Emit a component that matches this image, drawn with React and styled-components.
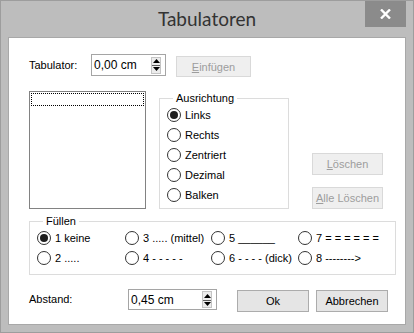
import React from 'react';
import styled, { createGlobalStyle } from 'styled-components';

const GlobalStyle = createGlobalStyle`
    html, body {
        margin: 0;
        padding: 0;
        background: #fff;
    }
    body {
        font-family: "Liberation Sans", Arial, sans-serif;
        font-size: 11px;
        color: #000;
    }
    * {
        box-sizing: border-box;
    }
`;

const Window = styled.div`
    width: 414px;
    height: 333px;
    background: #bdbdbd;
    border: 1px solid #9d9d9d;
    display: flex;
    flex-direction: column;
`;

const TitleBar = styled.div`
    height: 36px;
    display: grid;
    grid-template-columns: 1fr auto 1fr;
    align-items: start;
`;

const Title = styled.div`
    grid-column: 2;
    font-family: Lato, "Open Sans", sans-serif;
    font-size: 19px;
    line-height: 36px;
    color: #333;
`;

const CloseButton = styled.div`
    grid-column: 3;
    justify-self: end;
    width: 41px;
    height: 26px;
    margin-right: 7px;
    background: #8b8b8b;
    display: flex;
    align-items: center;
    justify-content: center;
`;

const Client = styled.div`
    flex: 1;
    margin: 0 7px 7px;
    background: #fff;
    border: 1px solid #a8a8a8;
    padding: 16px 0 0 20px;
    display: flex;
    flex-direction: column;
`;

const Row = styled.div`
    display: flex;
    align-items: flex-start;
    margin-top: ${p => p.$top || 0}px;
`;

const FieldLabel = styled.div`
    width: ${p => p.$width}px;
    line-height: ${p => p.$height || 22}px;
`;

const SpinInput = styled.div`
    width: ${p => p.$width}px;
    height: ${p => p.$height}px;
    border: 1px solid #a5a5a5;
    display: flex;
    align-items: center;
    justify-content: space-between;
    padding: 0 4px 0 2px;
    font-size: 12px;
`;

const SpinBox = styled.div`
    width: 10px;
    height: 17px;
    border: 1px solid #c4c4c4;
    background: #ececec;
    display: grid;
    grid-template-rows: 1fr 1fr;
    & > span + span {
        border-top: 1px solid #606060;
    }
`;

const SpinHalf = styled.span`
    display: flex;
    align-items: center;
    justify-content: center;
`;

const Button = styled.div`
    width: ${p => p.$width}px;
    height: ${p => p.$height || 22}px;
    margin-top: ${p => p.$top || 0}px;
    margin-left: ${p => p.$left || 0}px;
    border: 1px solid ${p => (p.$disabled ? '#d9d9d9' : '#acacac')};
    background: ${p => (p.$disabled ? '#efefef' : '#e5e5e5')};
    color: ${p => (p.$disabled ? '#9d9d9d' : '#000')};
    display: flex;
    align-items: center;
    justify-content: center;
    flex: none;
    u {
        text-decoration-thickness: 1px;
    }
`;

const Middle = styled.div`
    display: flex;
    height: 118px;
    margin-top: 14px;
`;

const ListBox = styled.div`
    width: 117px;
    border: 1px solid #828282;
    padding: 1px;
`;

const FocusItem = styled.div`
    height: 13px;
    border: 1px dotted #000;
`;

const Group = styled.fieldset`
    margin: 0 0 0 ${p => p.$left || 0}px;
    padding: 0 0 ${p => p.$bottom || 0}px 7px;
    border: 1px solid #dcdcdc;
    width: ${p => p.$width}px;
    min-width: 0;
`;

const Legend = styled.legend`
    margin-left: 6px;
    padding: 0 3px;
    line-height: 14px;
`;

const RadioList = styled.div`
    display: grid;
    grid-template-columns: ${p => p.$columns || '1fr'};
    grid-auto-rows: 20px;
`;

const RadioItem = styled.label`
    display: flex;
    align-items: center;
    gap: 4px;
    white-space: nowrap;
`;

const RadioCircle = styled.span`
    width: 14px;
    height: 14px;
    border-radius: 50%;
    border: 1px solid #333;
    background: #fff;
    flex: none;
    display: flex;
    align-items: center;
    justify-content: center;
    &::after {
        content: '';
        width: 8px;
        height: 8px;
        border-radius: 50%;
        background: ${p => (p.$checked ? '#1e1e1e' : 'transparent')};
    }
`;

const SideButtons = styled.div`
    margin-left: 23px;
    display: flex;
    flex-direction: column;
    justify-content: flex-end;
    gap: 12px;
`;

const Arrow = ({ down }) => (
    <svg width="7" height="4" viewBox="0 0 7 4">
        <path d={down ? 'M0 0 L7 0 L3.5 4 Z' : 'M0 4 L3.5 0 L7 4 Z'} fill="#000" />
    </svg>
);

const Spinner = ({ value, width, height }) => (
    <SpinInput $width={width} $height={height}>
        <span>{value}</span>
        <SpinBox>
            <SpinHalf><Arrow /></SpinHalf>
            <SpinHalf><Arrow down /></SpinHalf>
        </SpinBox>
    </SpinInput>
);

const Radio = ({ checked, children }) => (
    <RadioItem>
        <RadioCircle $checked={checked} />
        {children}
    </RadioItem>
);

const alignments = ['Links', 'Rechts', 'Zentriert', 'Dezimal', 'Balken'];
const fills = [
    '1 keine', '3 ..... (mittel)', '5 ______', '7 = = = = = =',
    '2 .....', '4 - - - - -', '6 - - - - (dick)', '8 -------->',
];

const App = () => (
    <>
        <GlobalStyle />
        <Window>
            <TitleBar>
                <Title>Tabulatoren</Title>
                <CloseButton>
                    <svg width="11" height="10" viewBox="0 0 11 10">
                        <path d="M1 0.5 L10 9.5 M10 0.5 L1 9.5" stroke="#fff" strokeWidth="2.4" />
                    </svg>
                </CloseButton>
            </TitleBar>
            <Client>
                <Row>
                    <FieldLabel $width={62}>Tabulator:</FieldLabel>
                    <Spinner value="0,00 cm" width={75} height={22} />
                    <Button $disabled $width={75} $height={21} $top={2} $left={10}>
                        <span><u>E</u>infügen</span>
                    </Button>
                </Row>
                <Middle>
                    <ListBox>
                        <FocusItem />
                    </ListBox>
                    <Group $left={13} $width={130} $bottom={5}>
                        <Legend>Ausrichtung</Legend>
                        <RadioList>
                            {alignments.map((a, i) => (
                                <Radio key={a} checked={i === 0}>{a}</Radio>
                            ))}
                        </RadioList>
                    </Group>
                    <SideButtons>
                        <Button $disabled $width={71}><span><u>L</u>öschen</span></Button>
                        <Button $disabled $width={71}><span><u>A</u>lle Löschen</span></Button>
                    </SideButtons>
                </Middle>
                <Row $top={5}>
                    <Group $width={367} $bottom={6}>
                        <Legend>Füllen</Legend>
                        <RadioList $columns="88px 86px 87px 1fr">
                            {fills.map((f, i) => (
                                <Radio key={f} checked={i === 0}>{f}</Radio>
                            ))}
                        </RadioList>
                    </Group>
                </Row>
                <Row $top={14}>
                    <FieldLabel $width={99} $height={21}>Abstand:</FieldLabel>
                    <Spinner value="0,45 cm" width={89} height={21} />
                    <Button $width={72} $top={1} $left={20}>Ok</Button>
                    <Button $width={72} $top={1} $left={7}>Abbrechen</Button>
                </Row>
            </Client>
        </Window>
    </>
);

export default App;
